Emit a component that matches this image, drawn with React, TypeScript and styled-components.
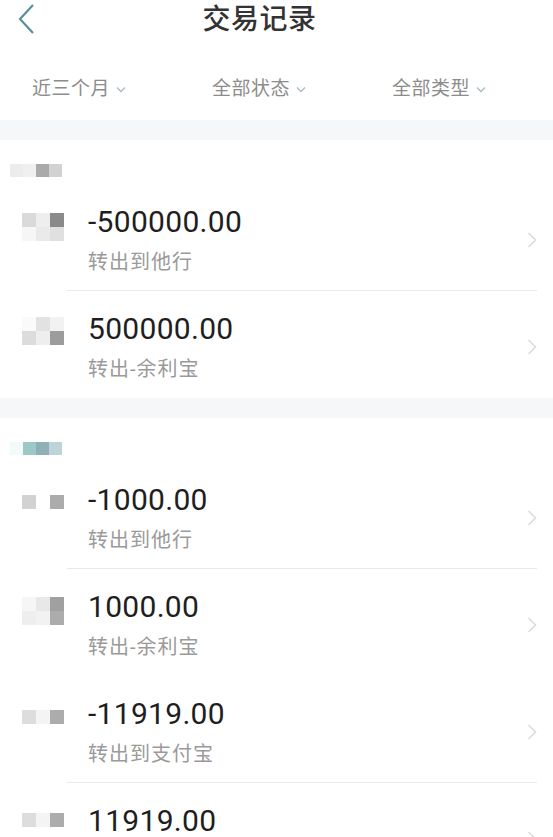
import styled, { createGlobalStyle } from 'styled-components';

const GlobalStyle = createGlobalStyle`
  html, body {
    margin: 0;
    padding: 0;
    background: #ffffff;
  }
  body {
    font-family: Roboto, "Noto Sans CJK SC", "Noto Sans", sans-serif;
    color: #222;
    -webkit-font-smoothing: antialiased;
  }
`;

const Page = styled.div`
  width: 553px;
  height: 837px;
  overflow: hidden;
  background: #fff;
`;

const Header = styled.header`
  height: 44px;
  display: grid;
  grid-template-columns: 1fr auto 1fr;
  align-items: center;
`;

const BackButton = styled.button`
  justify-self: start;
  margin-left: 16px;
  margin-top: -6px;
  padding: 0;
  border: 0;
  background: none;
  display: flex;
`;

const Title = styled.h1`
  margin: -4px 34px 0 0;
  font-size: 28px;
  line-height: 36px;
  font-weight: 500;
  color: #333;
  letter-spacing: 0.5px;
`;

const FilterBar = styled.div`
  display: grid;
  grid-template-columns: repeat(3, 180px);
  padding: 34px 0 20px 32px;
`;

const Filter = styled.div`
  display: flex;
  align-items: center;
  gap: 6px;
  font-size: 19px;
  line-height: 22px;
  color: #8c8c8c;
  letter-spacing: 0.5px;
`;

const Band = styled.div`
  height: 20px;
  background: #f6f7f9;
`;

const SectionHead = styled.div`
  height: 44px;
  display: flex;
  align-items: flex-end;
  padding: 0 0 7px 10px;
  box-sizing: border-box;
`;

const Cells = styled.div<{ $cols: number; $cell: number }>`
  display: grid;
  grid-template-columns: repeat(${p => p.$cols}, ${p => p.$cell}px);
  grid-auto-rows: ${p => p.$cell}px;
`;

const Cell = styled.span<{ $c: string }>`
  background: ${p => p.$c};
`;

const Row = styled.div`
  height: 107px;
  display: flex;
`;

const Stamp = styled.div<{ $top: number }>`
  width: 45px;
  padding-left: 22px;
  padding-top: ${p => p.$top}px;
`;

const Body = styled.div<{ $line: boolean }>`
  flex: 1;
  margin-right: 16px;
  padding-left: 21px;
  display: flex;
  border-bottom: 1px solid ${p => (p.$line ? '#e9e9eb' : 'transparent')};
`;

const Texts = styled.div`
  flex: 1;
  padding-top: 23px;
`;

const Amount = styled.div`
  font-size: 30px;
  line-height: 30px;
  color: #1e1e1e;
  letter-spacing: 0.3px;
`;

const Note = styled.div`
  margin-top: 13px;
  font-size: 20px;
  line-height: 24px;
  color: #9a9a9a;
  letter-spacing: 1px;
`;

const Arrow = styled.div`
  margin-top: 48px;
  display: flex;
`;

type Tx = {
  amount: string;
  note: string;
  cells: string[];
  cols: number;
  top: number;
  line: boolean;
};

const Mosaic = ({ cells, cols, size = 14 }: { cells: string[]; cols: number; size?: number }) => (
  <Cells $cols={cols} $cell={size}>
    {cells.map((c, i) => (
      <Cell key={i} $c={c} />
    ))}
  </Cells>
);

const ChevronDown = () => (
  <svg width="10" height="7" viewBox="0 0 10 7">
    <path d="M1 1.5 L5 5.5 L9 1.5" fill="none" stroke="#a8bac4" strokeWidth="1.3" />
  </svg>
);

const ChevronRight = () => (
  <svg width="10" height="16" viewBox="0 0 10 16">
    <path d="M1.5 1 L8.5 8 L1.5 15" fill="none" stroke="#dcdcdc" strokeWidth="1.6" />
  </svg>
);

const sections: { head: string[]; rows: Tx[] }[] = [
  {
    head: ['#ececec', '#f0f0f0', '#aaaaaa', '#d2d2d2'],
    rows: [
      {
        amount: '-500000.00',
        note: '转出到他行',
        cells: ['#dadada', '#eeeeee', '#8a8a8a', '#f6f6f6', '#eaeaea', '#e0e0e0'],
        cols: 3,
        top: 29,
        line: true,
      },
      {
        amount: '500000.00',
        note: '转出-余利宝',
        cells: ['#fafafa', '#e2e2e2', '#f2f2f2', '#dcdcdc', '#eeeeee', '#9c9c9c'],
        cols: 3,
        top: 26,
        line: false,
      },
    ],
  },
  {
    head: ['#f4fafa', '#9cc8c8', '#8fb0b4', '#bcd4d8'],
    rows: [
      {
        amount: '-1000.00',
        note: '转出到他行',
        cells: ['#d2d2d2', '#ffffff', '#acacac'],
        cols: 3,
        top: 33,
        line: true,
      },
      {
        amount: '1000.00',
        note: '转出-余利宝',
        cells: ['#f6f6f6', '#e8e8e8', '#a0a0a0', '#eeeeee', '#f2f2f2', '#acacac'],
        cols: 3,
        top: 28,
        line: false,
      },
      {
        amount: '-11919.00',
        note: '转出到支付宝',
        cells: ['#dddddd', '#f4f4f4', '#acacac'],
        cols: 3,
        top: 34,
        line: true,
      },
      {
        amount: '11919.00',
        note: '转出-余利宝',
        cells: ['#dddddd', '#f4f4f4', '#acacac'],
        cols: 3,
        top: 30,
        line: false,
      },
    ],
  },
];

export default function App() {
  return (
    <Page>
      <GlobalStyle />
      <Header>
        <BackButton aria-label="返回">
          <svg width="20" height="32" viewBox="0 0 20 32">
            <path d="M17 2 L4 16 L17 30" fill="none" stroke="#5a8f9b" strokeWidth="2.2" />
          </svg>
        </BackButton>
        <Title>交易记录</Title>
        <span />
      </Header>

      <FilterBar>
        {['近三个月', '全部状态', '全部类型'].map(f => (
          <Filter key={f}>
            {f}
            <ChevronDown />
          </Filter>
        ))}
      </FilterBar>

      {sections.map((s, si) => (
        <div key={si}>
          <Band />
          <SectionHead>
            <Mosaic cells={s.head} cols={4} size={13} />
          </SectionHead>
          {s.rows.map((r, ri) => (
            <Row key={ri}>
              <Stamp $top={r.top}>
                <Mosaic cells={r.cells} cols={r.cols} />
              </Stamp>
              <Body $line={r.line}>
                <Texts>
                  <Amount>{r.amount}</Amount>
                  <Note>{r.note}</Note>
                </Texts>
                <Arrow>
                  <ChevronRight />
                </Arrow>
              </Body>
            </Row>
          ))}
        </div>
      ))}
    </Page>
  );
}
